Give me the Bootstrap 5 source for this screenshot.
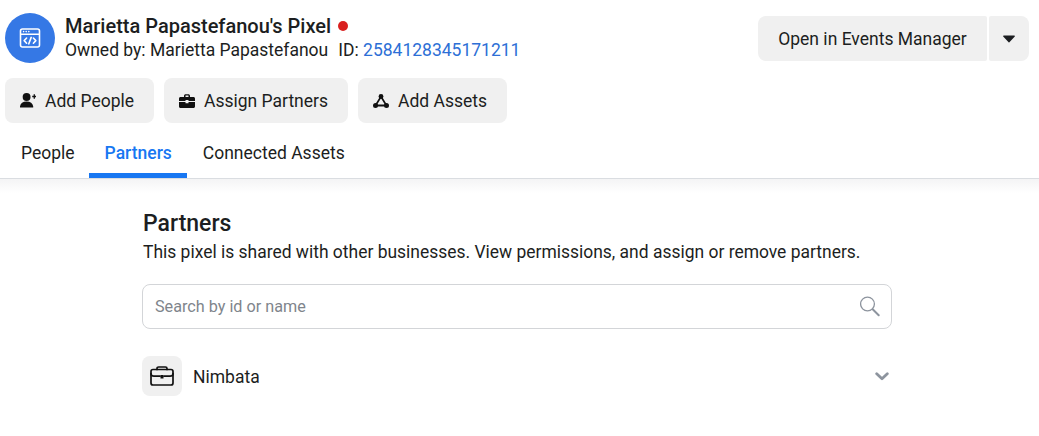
<!DOCTYPE html>
<html lang="en">
<head>
<meta charset="utf-8">
<title>Pixel</title>
<link href="https://cdn.jsdelivr.net/npm/bootstrap@5.3.0/dist/css/bootstrap.min.css" rel="stylesheet">
<style>
html,body{height:436px;overflow:hidden;background:#fff}
body{font-family:Roboto,"Liberation Sans",sans-serif;color:#1c1e21;font-size:17.5px}
.head-zone{padding:13px 10px 0 5px;height:63px}
.pix-avatar{width:50px;height:50px;background:#3578e5;border-radius:50%}
.pix-id-block{margin-left:10px}
.pix-title{font-size:20px;font-weight:500;line-height:24px;color:#1c1e21}
.pix-dot{width:10px;height:10px;background:#d9201f;border-radius:50%;margin-left:7px}
.pix-owner{font-size:17.5px;line-height:24px;color:#1c1e21;white-space:nowrap}
.pix-owner a{color:#2d6fd6;text-decoration:none}
.pix-id{margin-left:10px}
.grey-btn{background:#f0f0f0;border:0;border-radius:8px;color:#1c1e21;font-size:17.5px;height:45px;padding:0;display:flex;align-items:center;justify-content:center}
.grey-btn:hover{background:#e8e8e8;color:#1c1e21}
.btn-lbl{padding-top:2px}
.top-actions{margin-top:3px;gap:2px}
.w-open{width:229px;border-radius:8px 2px 2px 8px}
.w-caret{width:40px;border-radius:2px 8px 8px 2px}
.act-row{padding:15px 0 0 5px;gap:10px}
.act-row .grey-btn{justify-content:flex-start;padding-left:15px}
.w-people{width:149px}.w-assign{width:184px}.w-assets{width:149px}
.lead-ico{margin-right:9px}
.tab-strip{height:56px;margin:0;padding:0 0 0 5px;border-bottom:1px solid #dadde1;align-items:stretch;flex-wrap:nowrap}
.tab-strip .nav-link{color:#1c1e21;font-size:17.5px;padding:5px 16px 0;margin:0;border-bottom:5px solid transparent;height:50px;display:flex;align-items:center;border-radius:0}
.tab-strip .nav-link.tab-first{padding-right:14px}
.tab-strip .nav-link.is-on{color:#1877f2;font-weight:500;border-bottom-color:#1877f2;padding:5px 15px 0 16px}
.tab-slot{height:55px;padding-top:5px}
.shade{height:14px;background:linear-gradient(#f4f4f5,#fff)}
.partner-zone{width:750px;margin-left:142px;padding-top:17px}
.pz-title{font-size:23px;font-weight:500;line-height:28px;margin:0 0 0 1px;color:#1c1e21}
.pz-sub{font-size:17.47px;line-height:24px;margin:2px 0 0 1px;color:#1c1e21;white-space:nowrap}
.search-box{height:45px;border:1px solid #d3d5d8;border-radius:8px;margin-top:20px;padding:0 11px 0 12px;display:flex;align-items:center}
.search-box input{border:0;outline:0;flex:1;font-size:16.2px;color:#1c1e21;background:transparent;padding:2px 0 0;font-family:inherit}
.search-box input::placeholder{color:#80858c;opacity:1}
.partner-row{margin-top:27px;padding-right:3px}
.brief-tile{width:40px;height:40px;background:#f0f0f0;border-radius:8px}
.partner-name{font-size:17.5px;margin-left:11px;padding-top:2px;color:#1c1e21}
</style>
</head>
<body>
<div class="head-zone d-flex justify-content-between align-items-start">
  <div class="d-flex align-items-center">
    <div class="pix-avatar d-flex align-items-center justify-content-center flex-shrink-0">
      <svg width="22" height="22" viewBox="0 0 22 22" fill="none" stroke="#fff" stroke-width="1.6" stroke-linecap="round" stroke-linejoin="round">
        <rect x="1.5" y="2" width="19" height="18" rx="2"/>
        <path d="M2 7.3h18"/>
        <circle cx="4.6" cy="4.6" r=".8" fill="#fff" stroke="none"/><circle cx="7.2" cy="4.6" r=".8" fill="#fff" stroke="none"/><circle cx="9.8" cy="4.6" r=".8" fill="#fff" stroke="none"/>
        <path d="M7.6 11 5.2 13.6l2.4 2.6M14.4 11l2.4 2.6-2.4 2.6M12.2 10.4l-2.4 6.4"/>
      </svg>
    </div>
    <div class="pix-id-block">
      <div class="d-flex align-items-center pix-title">Marietta Papastefanou's Pixel<span class="pix-dot"></span></div>
      <div class="pix-owner">Owned by: Marietta Papastefanou<span class="pix-id">ID: <a href="#">2584128345171211</a></span></div>
    </div>
  </div>
  <div class="d-flex top-actions">
    <button class="grey-btn w-open" type="button"><span class="btn-lbl">Open in Events Manager</span></button>
    <button class="grey-btn w-caret" type="button" aria-label="More">
      <svg width="12" height="8" viewBox="0 0 12 8"><path d="M.6.6h10.800a.5.5 0 0 1 .4.8L6.400 7.200a.5.5 0 0 1-.8 0L.2 1.400A.5.5 0 0 1 .6.600z" fill="#1c1e21"/></svg>
    </button>
  </div>
</div>
<div class="d-flex act-row">
  <button class="grey-btn w-people" type="button">
    <svg class="lead-ico" width="16" height="15" viewBox="0 0 17 16" fill="#111"><circle cx="7" cy="4.300" r="4.200"/><path d="M.3 15.500c-.5 0-.4-.7-.3-1.300C.5 11 3 9 7 9s6.500 2 7 5.200c.1.600.2 1.300-.3 1.300z"/><path d="M13 3h1.500V1.300h1.400V3h1.100v1.400h-1.100v1.700h-1.400V4.400H13z"/></svg>
    <span class="btn-lbl">Add People</span>
  </button>
  <button class="grey-btn w-assign" type="button">
    <svg class="lead-ico" width="16" height="14" viewBox="0 0 16 14" fill="#111"><path d="M5 3V1.800C5 .8 5.800.2 6.600.2h2.800c.8 0 1.600.6 1.600 1.600V3h-1.500V2c0-.3-.2-.4-.4-.4H6.900c-.2 0-.4.1-.4.4v1z"/><path d="M1.500 3h13c.8 0 1.500.7 1.500 1.500V7H9.500V6h-3v1H0V4.500C0 3.700.7 3 1.500 3z"/><path d="M0 8h6.500v1.200h3V8H16v4.500c0 .8-.7 1.500-1.500 1.500h-13C.7 14 0 13.300 0 12.500z"/></svg>
    <span class="btn-lbl">Assign Partners</span>
  </button>
  <button class="grey-btn w-assets" type="button">
    <svg class="lead-ico" width="16" height="14" viewBox="0 0 16 14" fill="#111" stroke="#111"><path d="M8 2.600 2.500 11.500h11z" fill="none" stroke-width="1.800"/><circle cx="8" cy="2.500" r="2.400" stroke="none"/><circle cx="2.500" cy="11.400" r="2.500" stroke="none"/><circle cx="13.500" cy="11.400" r="2.500" stroke="none"/></svg>
    <span class="btn-lbl">Add Assets</span>
  </button>
</div>
<ul class="nav tab-strip">
  <li class="nav-item tab-slot"><a class="nav-link tab-first" href="#">People</a></li>
  <li class="nav-item tab-slot"><a class="nav-link is-on" href="#">Partners</a></li>
  <li class="nav-item tab-slot"><a class="nav-link" href="#">Connected Assets</a></li>
</ul>
<div class="shade"></div>
<main class="partner-zone">
  <h2 class="pz-title">Partners</h2>
  <p class="pz-sub">This pixel is shared with other businesses. View permissions, and assign or remove partners.</p>
  <div class="search-box">
    <input type="text" placeholder="Search by id or name" aria-label="Search">
    <svg width="20" height="21" viewBox="0 0 20 21" fill="none" stroke="#8d949e"><circle cx="7.500" cy="8" r="6.900" stroke-width="1.300"/><path d="m12.700 13.200 6 6" stroke-width="2" stroke-linecap="round"/></svg>
  </div>
  <div class="partner-row d-flex align-items-center justify-content-between">
    <div class="d-flex align-items-center">
      <div class="brief-tile d-flex align-items-center justify-content-center">
        <svg width="24" height="20" viewBox="0 0 24 20" fill="none" stroke="#111" stroke-width="1.700" stroke-linejoin="round" stroke-linecap="round"><rect x="1" y="3.500" width="22" height="15.500" rx="2"/><path d="M7 3.500V2.600C7 1.700 7.700 1 8.600 1h6.800c.9 0 1.600.7 1.600 1.600v.9"/><path d="M1 7.500c0 1.600 1 2.700 3 2.700h6M14 10.200h6c2 0 3-1.100 3-2.700"/><rect x="10.500" y="9" width="3" height="3.500" fill="#111" stroke="none"/></svg>
      </div>
      <span class="partner-name">Nimbata</span>
    </div>
    <svg width="14" height="9" viewBox="0 0 14 9" fill="none" stroke="#8d949e" stroke-width="2.800" stroke-linecap="round" stroke-linejoin="round"><path d="m1.700 1.700 5.300 5 5.300-5"/></svg>
  </div>
</main>
<script src="https://cdn.jsdelivr.net/npm/bootstrap@5.3.0/dist/js/bootstrap.bundle.min.js"></script>
</body>
</html>
